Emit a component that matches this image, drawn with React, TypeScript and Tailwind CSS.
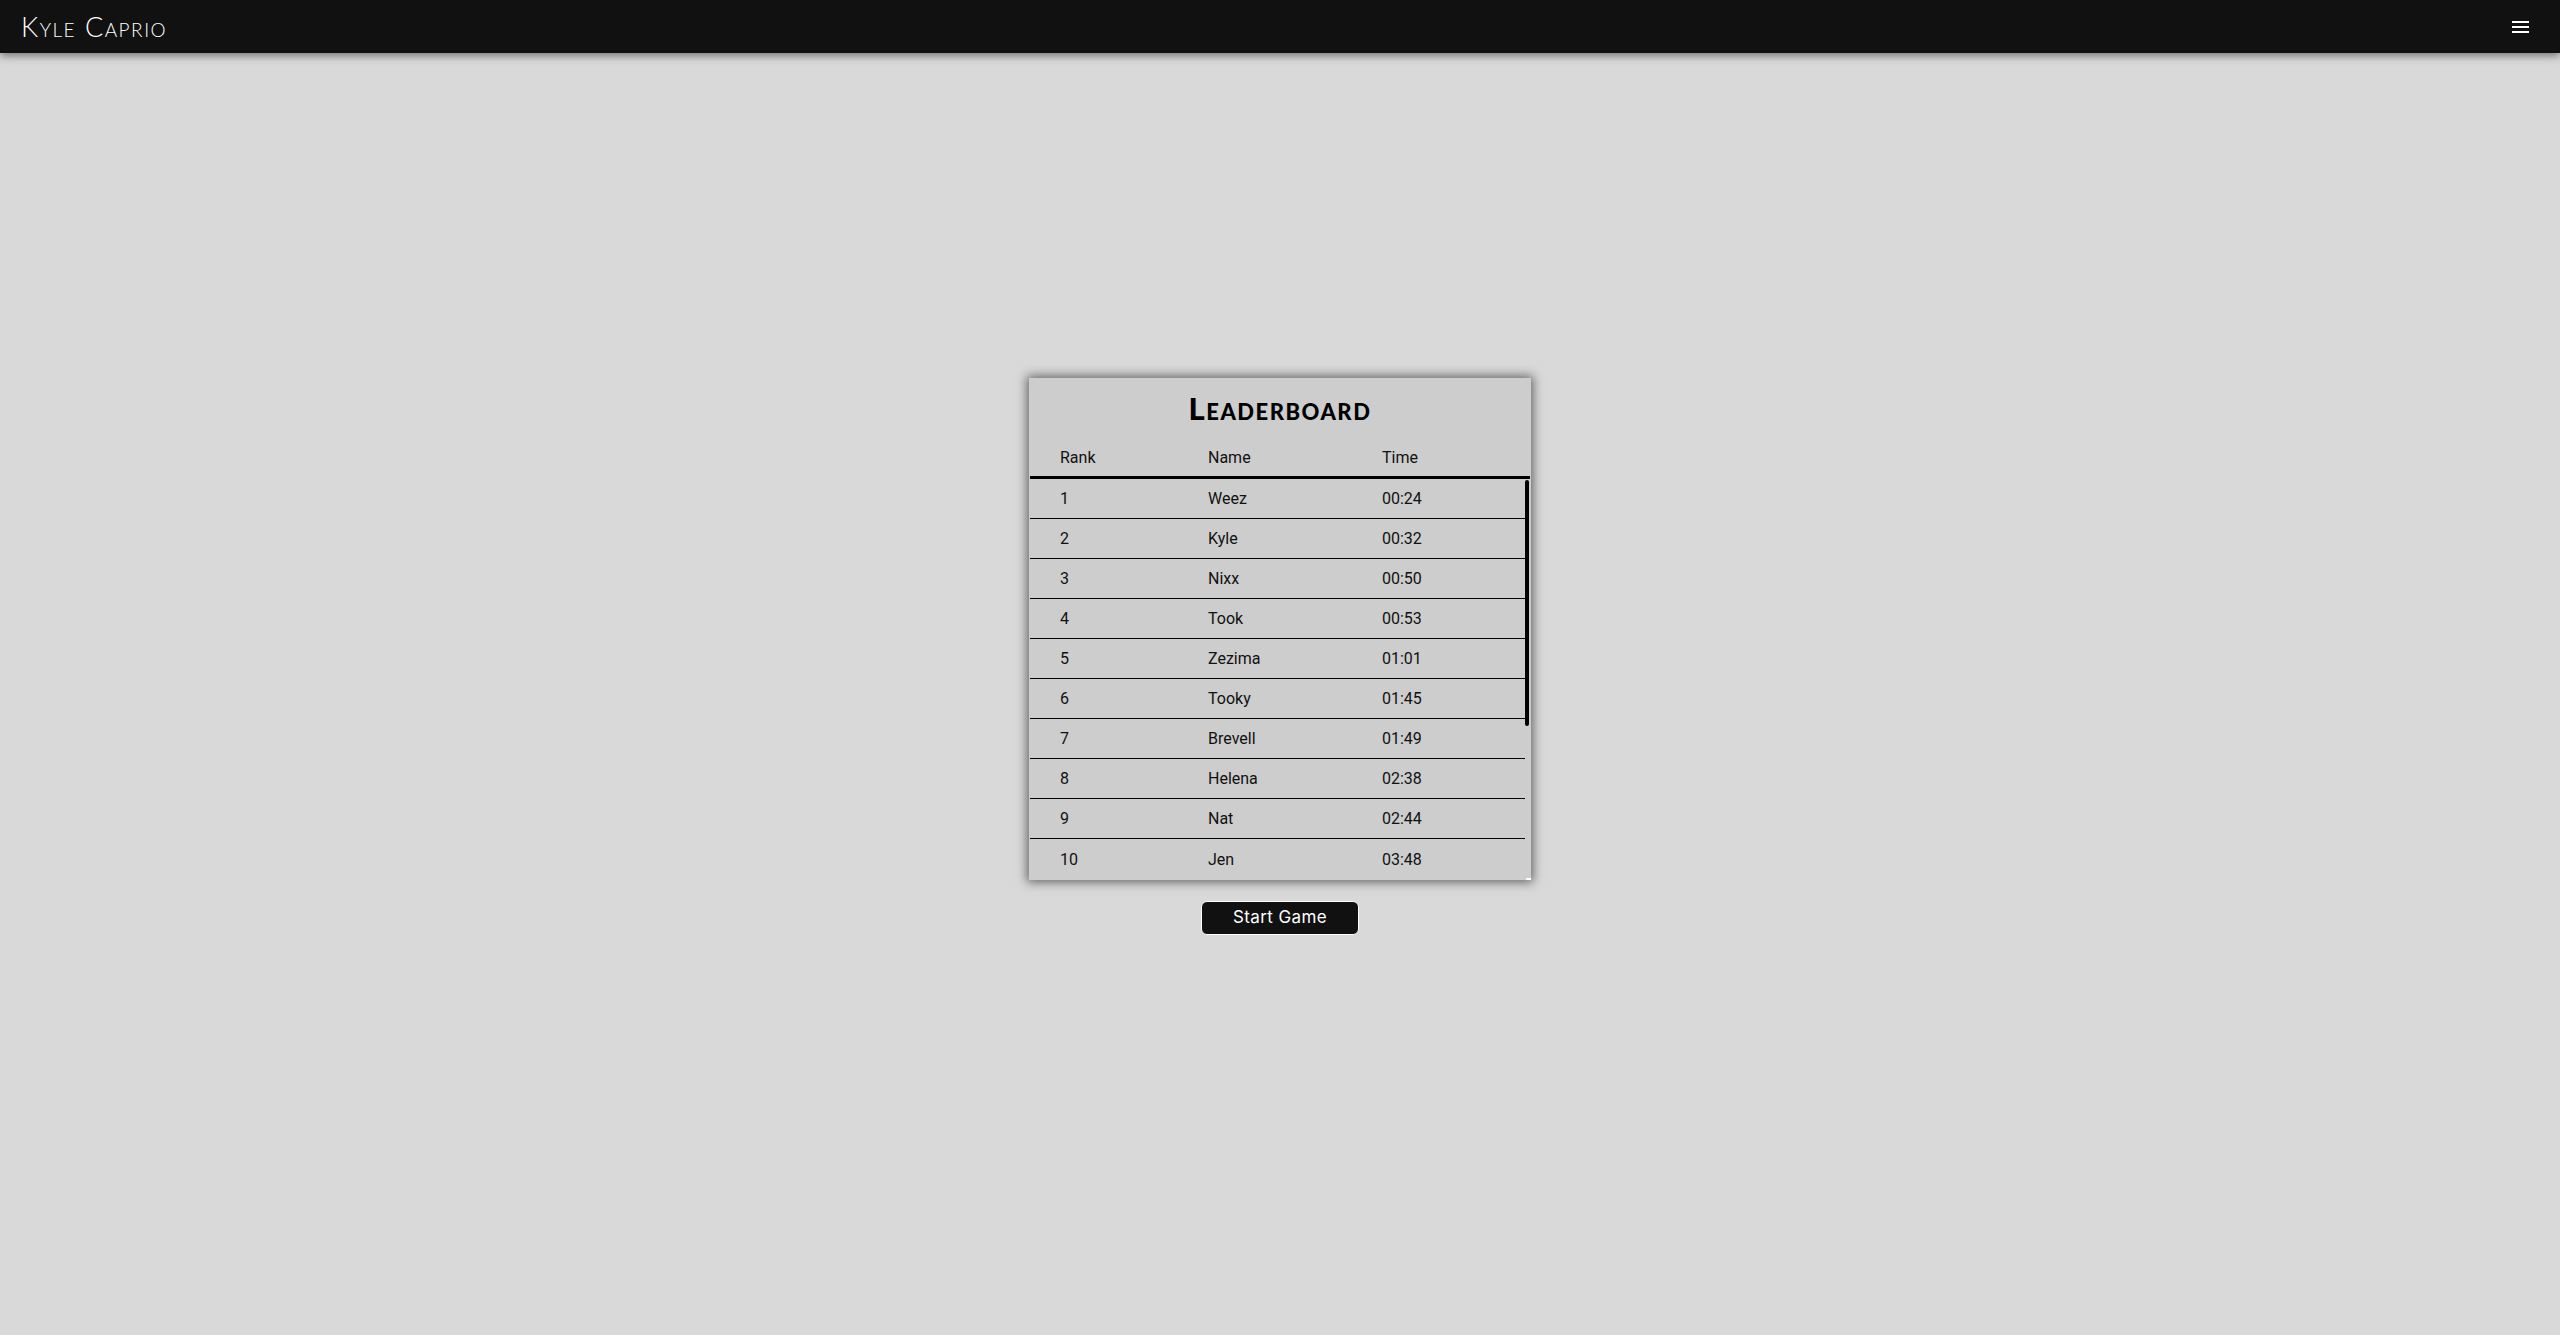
import React from "react";

const scores = [
  ["1", "Weez", "00:24"],
  ["2", "Kyle", "00:32"],
  ["3", "Nixx", "00:50"],
  ["4", "Took", "00:53"],
  ["5", "Zezima", "01:01"],
  ["6", "Tooky", "01:45"],
  ["7", "Brevell", "01:49"],
  ["8", "Helena", "02:38"],
  ["9", "Nat", "02:44"],
  ["10", "Jen", "03:48"],
];

function Navbar() {
  return (
    <header className="h-[53px] w-full bg-[#111111] flex items-center justify-between pl-[21px] pr-[31px] shadow-[0_3px_8px_rgba(0,0,0,0.45)] relative z-10">
      <span className="font-['Lato',sans-serif] font-light text-[27px] tracking-[1.5px] text-white [font-variant:small-caps] leading-none">
        Kyle Caprio
      </span>
      <button className="flex flex-col gap-[3px] w-[17px]">
        <span className="h-[2px] w-full bg-white" />
        <span className="h-[2px] w-full bg-white" />
        <span className="h-[2px] w-full bg-white" />
      </button>
    </header>
  );
}

function Leaderboard() {
  return (
    <div className="w-[502px] h-[502px] bg-[#cdcdcd] shadow-[0_0_10px_2px_rgba(0,0,0,0.55)] flex flex-col font-['Roboto',sans-serif] text-[16px] text-[#111]">
      <h1 className="pt-[12px] text-center font-['Lato',sans-serif] font-black text-[31px] leading-[36px] tracking-[1.5px] [font-variant:small-caps] text-black">
        Leaderboard
      </h1>
      <div className="mx-px grid grid-cols-[148px_174px_1fr] pl-[30px] pt-[20px] pb-[6px] leading-[24px] border-b-[3px] border-black">
        <span>Rank</span>
        <span>Name</span>
        <span>Time</span>
      </div>
      <div className="flex-1 flex ml-px min-h-0">
        <div className="flex-1 overflow-hidden">
          {scores.map(([rank, name, time]) => (
            <div
              key={rank}
              className="h-[40px] grid grid-cols-[148px_174px_1fr] pl-[30px] pt-px items-center border-b border-black last:border-b-0"
            >
              <span>{rank}</span>
              <span>{name}</span>
              <span>{time}</span>
            </div>
          ))}
        </div>
        <div className="w-[6px] flex flex-col justify-between">
          <div className="w-[4px] h-[246px] mt-px bg-black rounded-[2px]" />
          <div className="w-[5px] h-[2px] bg-white self-end" />
        </div>
      </div>
    </div>
  );
}

export default function App() {
  return (
    <div className="min-h-screen w-full bg-[#d9d9d9] flex flex-col">
      <Navbar />
      <main className="flex flex-col items-center pt-[325px]">
        <Leaderboard />
        <button className="mt-[21px] w-[158px] h-[34px] rounded-[6px] bg-[#111111] border border-white text-white font-['Inter',sans-serif] text-[17px] tracking-[0.4px]">
          Start Game
        </button>
      </main>
    </div>
  );
}
